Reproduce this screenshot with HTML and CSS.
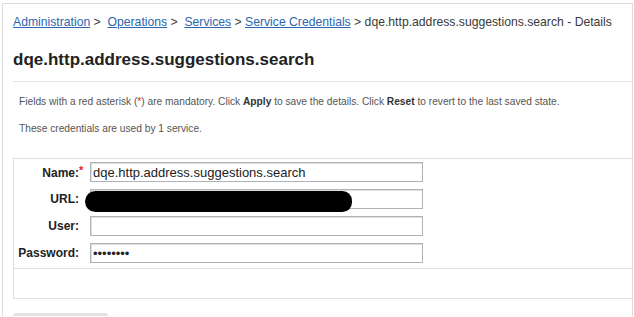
FILE: index.html
```html
<!DOCTYPE html>
<html>
<head>
<meta charset="utf-8">
<link rel="stylesheet" href="styles.css">
</head>
<body>
<div class="frame">
  <div class="crumbs">
    <a href="#">Administration</a> &gt;&nbsp; <a href="#">Operations</a> &gt;&nbsp; <a href="#">Services</a> &gt; <a href="#">Service Credentials</a> &gt; dqe.http.address.suggestions.search - Details
  </div>
  <h1 class="title">dqe.http.address.suggestions.search</h1>
  <div class="info">
    <p class="note">Fields with a red asterisk (<span class="req">*</span>) are mandatory. Click <b>Apply</b> to save the details. Click <b>Reset</b> to revert to the last saved state.</p>
    <p class="note">These credentials are used by 1 service.</p>
  </div>
  <div class="formbox">
    <div class="rows">
      <label class="lbl">Name:<span class="star">*</span></label>
      <input class="field" type="text" value="dqe.http.address.suggestions.search">
      <label class="lbl">URL:<span class="star"></span></label>
      <div class="fieldwrap">
        <input class="field" type="text" value="">
        <div class="redact"></div>
      </div>
      <label class="lbl">User:<span class="star"></span></label>
      <input class="field" type="text" value="">
      <label class="lbl">Password:<span class="star"></span></label>
      <input class="field" type="password" value="********">
    </div>
    <div class="spacer"></div>
  </div>
  <div class="btnstub"></div>
</div>
</body>
</html>
```
FILE: styles.css
```css
html, body {
  margin: 0;
  padding: 0;
  background: #fff;
}
body {
  font-family: "Liberation Sans", Arial, sans-serif;
  color: #333;
}
.frame {
  margin: 3px 1px 0 2px;
  border: 1px solid #dcdcdc;
  border-bottom: 0;
  height: 313px;
  overflow: hidden;
  padding-left: 10px;
  box-sizing: border-box;
}
.crumbs {
  padding-top: 11px;
  font-size: 12.2px;
  line-height: 15px;
  color: #3a3a3a;
  white-space: nowrap;
}
.crumbs a {
  color: #2c66ae;
  text-decoration: underline;
}
.title {
  margin: 20px 0 11px;
  font-size: 17px;
  line-height: 20px;
  font-weight: bold;
  color: #222;
}
.info {
  border-top: 1px solid #e4e4e4;
  height: 77px;
  padding: 14px 0 0 6px;
  box-sizing: border-box;
}
.note {
  margin: 0 0 15px;
  font-size: 10.2px;
  line-height: 12px;
  color: #555;
  white-space: nowrap;
}
.note b {
  color: #333;
}
.req {
  color: #d22;
}
.formbox {
  border-top: 1px solid #e0e0e0;
  border-left: 1px solid #e0e0e0;
}
.rows {
  display: grid;
  grid-template-columns: 70px 333px;
  column-gap: 6px;
  row-gap: 7px;
  padding: 3px 0 5px;
  border-bottom: 1px solid #e0e0e0;
  align-items: center;
}
.lbl {
  text-align: right;
  font-size: 12px;
  font-weight: bold;
  color: #222;
  white-space: nowrap;
}
.star {
  display: inline-block;
  width: 5px;
  text-align: left;
  color: #d22;
  font-size: 11px;
  vertical-align: 3px;
}
.field {
  display: block;
  width: 333px;
  height: 20px;
  box-sizing: border-box;
  margin: 0;
  border: 1px solid #aeb3b8;
  box-shadow: inset 1px 1px 0 #dde0e3;
  padding: 0 2px;
  font-family: "Liberation Sans", Arial, sans-serif;
  font-size: 13px;
  color: #222;
  background: #fff;
  outline: none;
}
.fieldwrap {
  position: relative;
}
.redact {
  position: absolute;
  left: -5px;
  top: 2px;
  width: 267px;
  height: 21px;
  background: #000;
  border-radius: 11px 10px 10px 11px;
}
.spacer {
  height: 29px;
  border-bottom: 1px solid #e0e0e0;
}
.btnstub {
  margin-top: 14px;
  width: 95px;
  height: 10px;
  background: #e2e2e2;
  border-radius: 3px 3px 0 0;
}
```
